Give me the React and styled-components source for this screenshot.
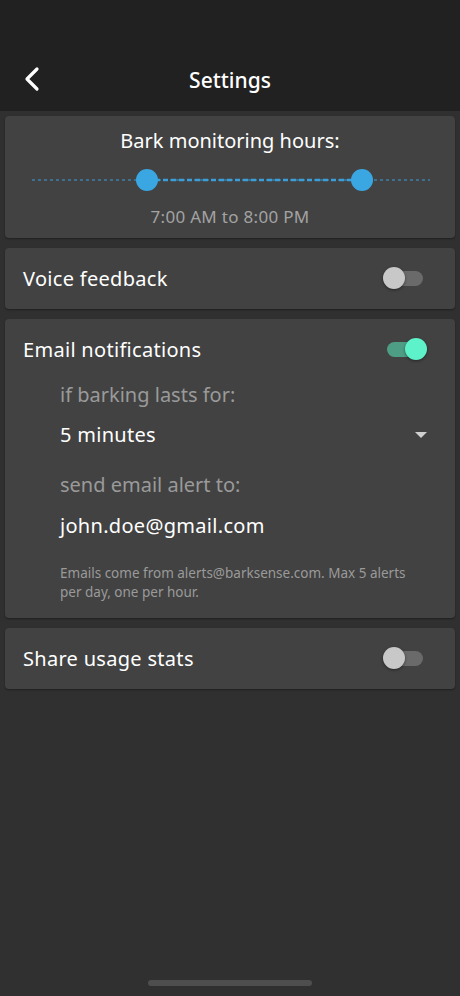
import React, { useState } from 'react'
import styled, { createGlobalStyle } from 'styled-components'

const Global = createGlobalStyle`
  html, body {
    margin: 0;
    padding: 0;
    background: #303030;
  }
  body {
    font-family: "Noto Sans", "Lato", sans-serif;
    color: #fff;
  }
`;

function Toggle({ on, onClick }) {
    return (
        <Track on={on ? 1 : 0} onClick={onClick}>
            <Thumb on={on ? 1 : 0} />
        </Track>
    )
}

function App() {
    const [voice, setVoice] = useState(false)
    const [email, setEmail] = useState(true)
    const [stats, setStats] = useState(false)

    return (
        <>
            <Global />
            <Page>
                <Header>
                    <Back>
                        <svg width="18" height="26" viewBox="0 0 18 26">
                            <path d="M14 3 L4 13 L14 23" fill="none" stroke="#fff" strokeWidth="3.2" strokeLinecap="round" strokeLinejoin="round" />
                        </svg>
                    </Back>
                    <Title>Settings</Title>
                </Header>

                <List>
                    <Card>
                        <SliderTitle>Bark monitoring hours:</SliderTitle>
                        <Slider>
                            <svg width="398" height="24" viewBox="0 0 398 24">
                                <line x1="0" y1="12" x2="398" y2="12" stroke="#3a9fd8" strokeWidth="1" strokeDasharray="3 3" />
                                <line x1="115" y1="12" x2="330" y2="12" stroke="#3a9fd8" strokeWidth="2.5" strokeDasharray="5 3" />
                                <circle cx="115" cy="12" r="11" fill="#3aa6e2" />
                                <circle cx="330" cy="12" r="11" fill="#3aa6e2" />
                            </svg>
                        </Slider>
                        <Range>7:00 AM to 8:00 PM</Range>
                    </Card>

                    <Card>
                        <Row>
                            <Label>Voice feedback</Label>
                            <Toggle on={voice} onClick={() => setVoice(!voice)} />
                        </Row>
                    </Card>

                    <Card>
                        <Row>
                            <Label>Email notifications</Label>
                            <Toggle on={email} onClick={() => setEmail(!email)} />
                        </Row>
                        <Sub>
                            <Hint>if barking lasts for:</Hint>
                            <Select>
                                <Value>5 minutes</Value>
                                <Caret />
                            </Select>
                            <Hint gap={24}>send email alert to:</Hint>
                            <Value gap={15}>john.doe@gmail.com</Value>
                            <Note>Emails come from alerts@barksense.com. Max 5 alerts per day, one per hour.</Note>
                        </Sub>
                    </Card>

                    <Card>
                        <Row>
                            <Label>Share usage stats</Label>
                            <Toggle on={stats} onClick={() => setStats(!stats)} />
                        </Row>
                    </Card>
                </List>

                <HomeBar />
            </Page>
        </>
    )
}

const Page = styled.div`
  width: 460px;
  height: 996px;
  display: flex;
  flex-direction: column;
  background: #303030;
`;

const Header = styled.div`
  height: 111px;
  background: #212121;
  display: flex;
  align-items: flex-end;
  justify-content: center;
  padding-bottom: 17px;
  box-sizing: border-box;
  position: relative;
`;

const Back = styled.div`
  position: absolute;
  left: 23px;
  bottom: 19px;
  display: flex;
`;

const Title = styled.div`
  font-size: 21px;
  font-weight: 500;
  line-height: 28px;
`;

const List = styled.div`
  display: flex;
  flex-direction: column;
  gap: 10px;
  padding: 5px 5px 0;
`;

const Card = styled.div`
  background: #424242;
  border-radius: 4px;
  box-shadow: 0 1px 2px rgba(0, 0, 0, 0.35);
  display: flex;
  flex-direction: column;
`;

const SliderTitle = styled.div`
  text-align: center;
  font-size: 20px;
  line-height: 26px;
  padding-top: 12px;
`;

const Slider = styled.div`
  display: flex;
  justify-content: center;
  margin-top: 14px;
  margin-left: 2px;
`;

const Range = styled.div`
  text-align: center;
  color: #a3a3a3;
  font-size: 17px;
  letter-spacing: 0.3px;
  line-height: 22px;
  padding: 14px 0 10px;
`;

const Row = styled.div`
  height: 61px;
  display: flex;
  align-items: center;
  justify-content: space-between;
  padding: 0 32px 0 18px;
`;

const Label = styled.div`
  font-size: 20px;
  letter-spacing: 0.3px;
  line-height: 26px;
`;

const Track = styled.div`
  width: 36px;
  height: 15px;
  border-radius: 8px;
  background: ${p => (p.on ? '#4e9e86' : '#6a6a6a')};
  position: relative;
  cursor: pointer;
`;

const Thumb = styled.div`
  position: absolute;
  top: -4px;
  left: ${p => (p.on ? '18px' : '-4px')};
  width: 22px;
  height: 22px;
  border-radius: 50%;
  background: ${p => (p.on ? '#5ef2cb' : '#c8c8c8')};
  box-shadow: 0 1px 3px rgba(0, 0, 0, 0.45);
`;

const Sub = styled.div`
  display: flex;
  flex-direction: column;
  padding: 0 28px 16px 55px;
`;

const Hint = styled.div`
  color: #9a9a9a;
  font-size: 20px;
  line-height: 26px;
  margin-top: ${p => (p.gap ? p.gap : 2)}px;
`;

const Select = styled.div`
  display: flex;
  align-items: center;
  justify-content: space-between;
`;

const Value = styled.div`
  font-size: 20px;
  letter-spacing: 0.3px;
  line-height: 26px;
  margin-top: ${p => (p.gap ? p.gap : 14)}px;
`;

const Caret = styled.div`
  margin-top: 14px;
  width: 0;
  height: 0;
  border-left: 6px solid transparent;
  border-right: 6px solid transparent;
  border-top: 6px solid #d0d0d0;
`;

const Note = styled.div`
  color: #9a9a9a;
  font-size: 13.5px;
  line-height: 19px;
  margin-top: 25px;
`;

const HomeBar = styled.div`
  margin: auto auto 10px;
  width: 164px;
  height: 6px;
  border-radius: 3px;
  background: #4e4e4e;
`;

export default App
